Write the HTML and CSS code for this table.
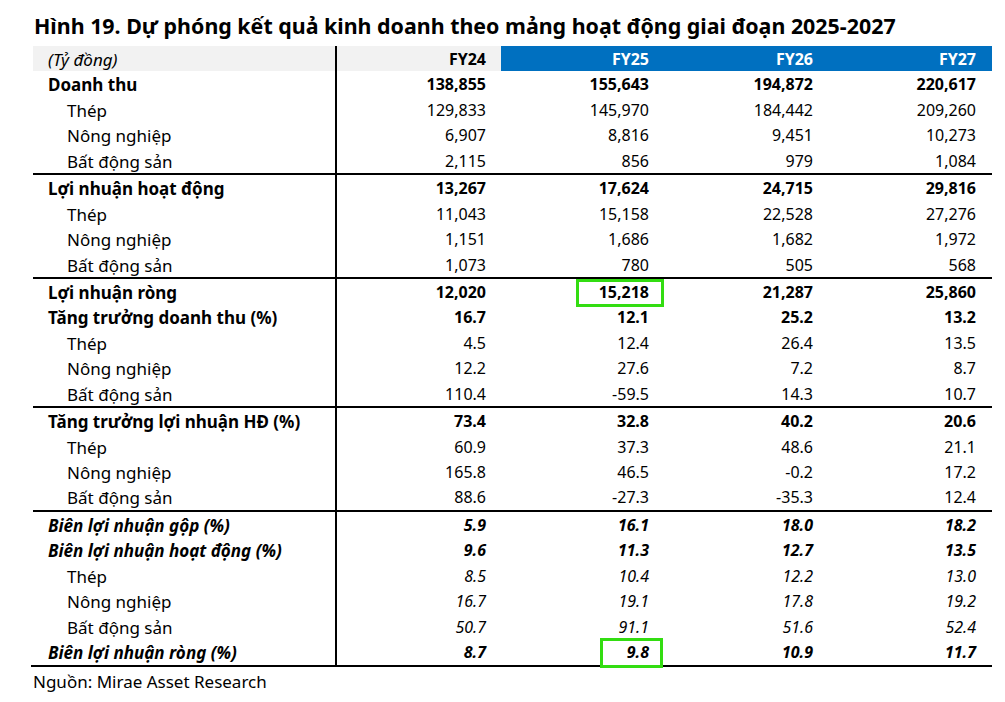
FILE: index.html
```html
<!DOCTYPE html>
<html lang="vi">
<head>
<meta charset="utf-8">
<title>Hình 19</title>
<link rel="stylesheet" href="styles.css">
</head>
<body>
<div class="page">
  <h1 class="title">Hình 19. Dự phóng kết quả kinh doanh theo mảng hoạt động giai đoạn 2025-2027</h1>
  <div class="table">
    <div class="row head">
      <div class="lbl it">(Tỷ đồng)</div>
      <div class="num grey b">FY24</div>
      <div class="num blue b">FY25</div>
      <div class="num blue b">FY26</div>
      <div class="num blue b">FY27</div>
    </div>

    <div class="row b"><div class="lbl">Doanh thu</div><div class="num">138,855</div><div class="num">155,643</div><div class="num">194,872</div><div class="num">220,617</div></div>
    <div class="row"><div class="lbl sub">Thép</div><div class="num">129,833</div><div class="num">145,970</div><div class="num">184,442</div><div class="num">209,260</div></div>
    <div class="row"><div class="lbl sub">Nông nghiệp</div><div class="num">6,907</div><div class="num">8,816</div><div class="num">9,451</div><div class="num">10,273</div></div>
    <div class="row"><div class="lbl sub">Bất động sản</div><div class="num">2,115</div><div class="num">856</div><div class="num">979</div><div class="num">1,084</div></div>

    <div class="sep"><div class="sep-l"></div><div class="sep-r"></div></div>
    <div class="row b"><div class="lbl">Lợi nhuận hoạt động</div><div class="num">13,267</div><div class="num">17,624</div><div class="num">24,715</div><div class="num">29,816</div></div>
    <div class="row"><div class="lbl sub">Thép</div><div class="num">11,043</div><div class="num">15,158</div><div class="num">22,528</div><div class="num">27,276</div></div>
    <div class="row"><div class="lbl sub">Nông nghiệp</div><div class="num">1,151</div><div class="num">1,686</div><div class="num">1,682</div><div class="num">1,972</div></div>
    <div class="row"><div class="lbl sub">Bất động sản</div><div class="num">1,073</div><div class="num">780</div><div class="num">505</div><div class="num">568</div></div>

    <div class="sep"><div class="sep-l"></div><div class="sep-r"></div></div>
    <div class="row b"><div class="lbl">Lợi nhuận ròng</div><div class="num">12,020</div><div class="num mark"><span class="hl hl1"></span>15,218</div><div class="num">21,287</div><div class="num">25,860</div></div>
    <div class="row b"><div class="lbl">Tăng trưởng doanh thu (%)</div><div class="num">16.7</div><div class="num">12.1</div><div class="num">25.2</div><div class="num">13.2</div></div>
    <div class="row"><div class="lbl sub">Thép</div><div class="num">4.5</div><div class="num">12.4</div><div class="num">26.4</div><div class="num">13.5</div></div>
    <div class="row"><div class="lbl sub">Nông nghiệp</div><div class="num">12.2</div><div class="num">27.6</div><div class="num">7.2</div><div class="num">8.7</div></div>
    <div class="row"><div class="lbl sub">Bất động sản</div><div class="num">110.4</div><div class="num">-59.5</div><div class="num">14.3</div><div class="num">10.7</div></div>

    <div class="sep"><div class="sep-l"></div><div class="sep-r"></div></div>
    <div class="row b"><div class="lbl">Tăng trưởng lợi nhuận HĐ (%)</div><div class="num">73.4</div><div class="num">32.8</div><div class="num">40.2</div><div class="num">20.6</div></div>
    <div class="row"><div class="lbl sub">Thép</div><div class="num">60.9</div><div class="num">37.3</div><div class="num">48.6</div><div class="num">21.1</div></div>
    <div class="row"><div class="lbl sub">Nông nghiệp</div><div class="num">165.8</div><div class="num">46.5</div><div class="num">-0.2</div><div class="num">17.2</div></div>
    <div class="row"><div class="lbl sub">Bất động sản</div><div class="num">88.6</div><div class="num">-27.3</div><div class="num">-35.3</div><div class="num">12.4</div></div>

    <div class="sep"><div class="sep-l"></div><div class="sep-r"></div></div>
    <div class="row b it"><div class="lbl">Biên lợi nhuận gộp (%)</div><div class="num">5.9</div><div class="num">16.1</div><div class="num">18.0</div><div class="num">18.2</div></div>
    <div class="row b it"><div class="lbl">Biên lợi nhuận hoạt động (%)</div><div class="num">9.6</div><div class="num">11.3</div><div class="num">12.7</div><div class="num">13.5</div></div>
    <div class="row it"><div class="lbl sub up">Thép</div><div class="num">8.5</div><div class="num">10.4</div><div class="num">12.2</div><div class="num">13.0</div></div>
    <div class="row it"><div class="lbl sub up">Nông nghiệp</div><div class="num">16.7</div><div class="num">19.1</div><div class="num">17.8</div><div class="num">19.2</div></div>
    <div class="row it"><div class="lbl sub up">Bất động sản</div><div class="num">50.7</div><div class="num">91.1</div><div class="num">51.6</div><div class="num">52.4</div></div>
    <div class="row b it"><div class="lbl">Biên lợi nhuận ròng (%)</div><div class="num">8.7</div><div class="num mark"><span class="hl hl2"></span>9.8</div><div class="num">10.9</div><div class="num">11.7</div></div>

    <div class="bottom"></div>
  </div>
  <p class="source">Nguồn: Mirae Asset Research</p>
</div>
</body>
</html>
```

FILE: styles.css
```css
* { box-sizing: border-box; }
html, body { margin: 0; padding: 0; background: #ffffff; }
body {
  font-family: "Noto Sans", "Open Sans", sans-serif;
  color: #000000;
  width: 1005px;
  height: 702px;
  overflow: hidden;
}
.page {
  padding: 12px 0 0 33px;
}
.title {
  margin: 0 0 6px 1px;
  font-size: 21.4px;
  line-height: 28px;
  font-weight: 700;
  letter-spacing: 0;
  white-space: nowrap;
}
.table {
  width: 959px;
  display: flex;
  flex-direction: column;
}
.row {
  display: grid;
  grid-template-columns: 304px 164px 163px 164px 164px;
  height: 25.45px;
  font-size: 16px;
  line-height: 23.45px;
}
.row > div { padding-top: 2px; }
.row.b { font-weight: 700; }
.row.it { font-style: italic; }
.lbl {
  padding-left: 15px;
  border-right: 2px solid #000;
  white-space: nowrap;
  font-size: 17px;
}
.lbl.sub { padding-left: 34px; }
.lbl.up { font-style: normal; }
.lbl.it { font-style: italic; }
.num {
  text-align: right;
  padding-right: 15px;
  white-space: nowrap;
}
.num:last-child { padding-right: 16px; }
.head .lbl, .head .grey { background: #f2f2f2; }
.head .blue { background: #0070c0; color: #ffffff; }
.b { font-weight: 700; }
.sep {
  display: grid;
  grid-template-columns: 304px 655px;
  height: 2px;
}
.sep-l, .sep-r { background: #000; }
.bottom {
  height: 2px;
  background: #000;
  margin-left: -2px;
  width: 961px;
}
.mark { position: relative; }
.hl {
  position: absolute;
  border: 3px solid #33dd11;
  right: 0;
}
.row > .mark > .hl { padding: 0; }
.hl1 { top: 0; height: 28px; width: 88px; }
.hl2 { top: -1px; height: 30px; width: 63px; right: 1px; }
.source {
  margin: 3px 0 0 0;
  font-size: 17px;
  line-height: 24px;
}
```
